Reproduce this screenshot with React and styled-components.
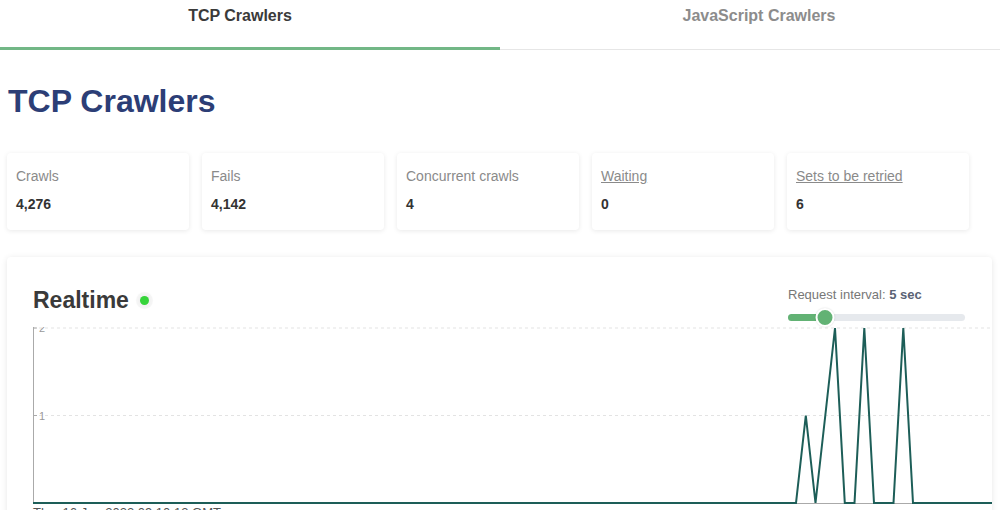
import React from 'react';
import styled, { createGlobalStyle, css } from 'styled-components';

const GlobalStyle = createGlobalStyle`
    body {
        margin: 0;
        background: #fff;
        font-family: "Liberation Sans", Arial, sans-serif;
        color: #333;
    }
`;

const green = '#62b274';

const TabBar = styled.div`
    display: flex;
    height: 50px;
    box-shadow: inset 0 -1px 0 #e6e6e6;
`;

const Tab = styled.div`
    flex: 1;
    display: flex;
    justify-content: center;
    box-sizing: border-box;
    padding-top: 7px;
    font-size: 16px;
    line-height: 18px;
    font-weight: bold;
    color: #8c8c8c;
    cursor: pointer;

    ${props => props.active && css`
        color: #3a3a3a;
        box-shadow: inset 0 -3px 0 #72b786;
    `}
`;

const TabLabel = styled.span`
    transform: translateX(${props => props.shift || 0}px);
`;

const Content = styled.div`
    padding: 0 8px 0 7px;
`;

const Heading = styled.h1`
    margin: 33px 0 0 1px;
    font-size: 32px;
    line-height: 37px;
    font-weight: bold;
    color: #2c3e76;
`;

const StatRow = styled.div`
    display: flex;
    gap: 13px;
    margin-top: 33px;
`;

const StatCard = styled.div`
    width: 182px;
    height: 77px;
    box-sizing: border-box;
    padding: 15px 9px 0;
    background: #fff;
    border-radius: 4px;
    box-shadow: 0 1px 5px rgba(0, 0, 0, 0.09);
`;

const StatLabel = styled.div`
    font-size: 14px;
    line-height: 16px;
    color: #8a8a8a;

    ${props => props.link && css`
        text-decoration: underline;
        cursor: pointer;
    `}
`;

const StatValue = styled.div`
    margin-top: 12px;
    font-size: 14px;
    line-height: 16px;
    font-weight: bold;
    color: #333;
`;

const ChartCard = styled.div`
    margin-top: 27px;
    padding: 30px 0 40px 26px;
    background: #fff;
    border-radius: 4px;
    box-shadow: 0 1px 6px rgba(0, 0, 0, 0.1);
`;

const ChartHeader = styled.div`
    display: flex;
    justify-content: space-between;
    align-items: flex-start;
    padding-right: 27px;
    height: 40px;
`;

const TitleRow = styled.div`
    display: flex;
    align-items: center;
    gap: 11px;
`;

const Title = styled.h2`
    margin: 0;
    font-size: 23px;
    line-height: 27px;
    font-weight: bold;
    color: #3a3a3a;
`;

const LiveDot = styled.span`
    width: 9px;
    height: 9px;
    border-radius: 50%;
    background: #36d43a;
    box-shadow: 0 0 0 4px rgba(0, 0, 0, 0.03), 0 0 6px rgba(0, 0, 0, 0.08);
`;

const IntervalBox = styled.div`
    width: 177px;
`;

const IntervalText = styled.div`
    font-size: 13px;
    line-height: 16px;
    color: #777;

    b {
        color: #5a6274;
    }
`;

const SliderTrack = styled.div`
    position: relative;
    margin-top: 5px;
    height: 19px;
    display: flex;
    align-items: center;
`;

const TrackBar = styled.div`
    flex: 1;
    height: 7px;
    border-radius: 4px;
    background: #e6e9ed;
    overflow: hidden;
`;

const TrackFill = styled.div`
    height: 100%;
    background: ${green};
`;

const Thumb = styled.div`
    position: absolute;
    top: 0;
    width: 15px;
    height: 15px;
    border: 2px solid #fff;
    border-radius: 50%;
    background: ${green};
    transform: translateX(-50%);
    box-shadow: 0 0 2px rgba(0, 0, 0, 0.15);
`;

const ChartSvg = styled.svg`
    display: block;
    width: 100%;
    height: 178px;
    overflow: hidden;
`;

const Caption = styled.div`
    font-size: 13px;
    line-height: 16px;
    color: #555;
`;

const stats = [
    { label: 'Crawls', value: '4,276' },
    { label: 'Fails', value: '4,142' },
    { label: 'Concurrent crawls', value: '4' },
    { label: 'Waiting', value: '0', link: true },
    { label: 'Sets to be retried', value: '6', link: true },
];

const series = [...Array(78).fill(0), 0, 1, 0, 1, 2, 0, 0, 2, 0, 0, 0, 2, 0, ...Array(9).fill(0)];

const W = 959;
const BASE = 176;
const UNIT = 87.5;

const Chart = () => {
    const step = 9.75;
    const x0 = 763 - 78 * step;
    const pts = series.map((v, i) => `${(x0 + i * step).toFixed(1)},${(BASE - v * UNIT).toFixed(1)}`);
    const points = [`0,${BASE}`, ...pts, `${W},${BASE}`].join(' ');

    return (
        <ChartSvg viewBox={`0 0 ${W} 178`} preserveAspectRatio="none">
            {[1, 2].map(v => (
                <g key={v}>
                    <line x1="0" x2={W} y1={BASE - v * UNIT} y2={BASE - v * UNIT} stroke="#e3e3e3" strokeDasharray="3 3" />
                    <line x1="0" x2="4" y1={BASE - v * UNIT} y2={BASE - v * UNIT} stroke="#aaa" />
                    <text x="6" y={BASE - v * UNIT + 4} fontSize="11" fill="#999" fontFamily="Liberation Sans, Arial, sans-serif">{v}</text>
                </g>
            ))}
            <line x1="0.5" x2="0.5" y1="0" y2={BASE} stroke="#aaa" />
            <line x1="0" x2={W} y1={BASE + 0.5} y2={BASE + 0.5} stroke="#aaa" />
            <polyline points={points} fill="none" stroke="#1d5e58" strokeWidth="2" strokeLinejoin="miter" />
        </ChartSvg>
    );
};

const App = () => {
    const interval = 5;
    const pct = ((interval - 1) / 19) * 100;

    return (
        <>
            <GlobalStyle />
            <TabBar>
                <Tab active><TabLabel shift={-10}>TCP Crawlers</TabLabel></Tab>
                <Tab><TabLabel shift={9}>JavaScript Crawlers</TabLabel></Tab>
            </TabBar>
            <Content>
                <Heading>TCP Crawlers</Heading>
                <StatRow>
                    {stats.map(s => (
                        <StatCard key={s.label}>
                            <StatLabel link={s.link}>{s.label}</StatLabel>
                            <StatValue>{s.value}</StatValue>
                        </StatCard>
                    ))}
                </StatRow>
                <ChartCard>
                    <ChartHeader>
                        <TitleRow>
                            <Title>Realtime</Title>
                            <LiveDot />
                        </TitleRow>
                        <IntervalBox>
                            <IntervalText>Request interval: <b>{interval} sec</b></IntervalText>
                            <SliderTrack>
                                <TrackBar>
                                    <TrackFill style={{ width: `${pct}%` }} />
                                </TrackBar>
                                <Thumb style={{ left: `${pct}%` }} />
                            </SliderTrack>
                        </IntervalBox>
                    </ChartHeader>
                    <Chart />
                    <Caption>Thu, 16 Jun 2022 09:10:13 GMT</Caption>
                </ChartCard>
            </Content>
        </>
    );
};

export default App;
